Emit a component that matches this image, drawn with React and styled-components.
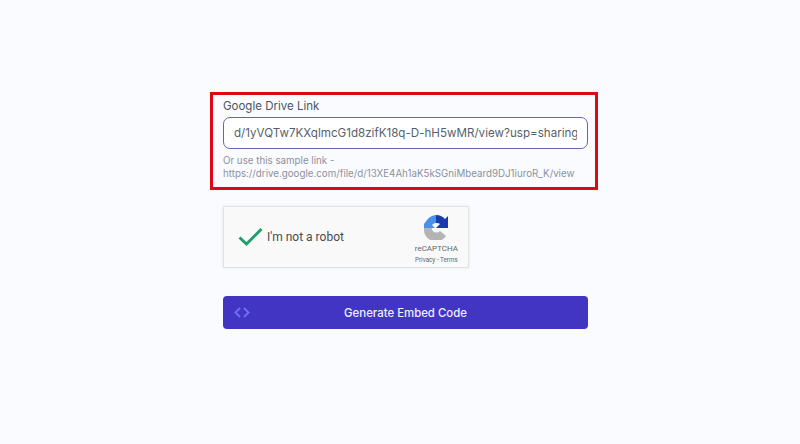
import React from 'react';
import styled, { createGlobalStyle } from 'styled-components';

const GlobalStyle = createGlobalStyle`
  html, body {
    margin: 0;
    padding: 0;
    background: #fafbfe;
  }
  * {
    box-sizing: border-box;
  }
`;

const Page = styled.div`
  width: 800px;
  height: 444px;
  overflow: hidden;
  padding: 92px 0 0 210px;
  background: #fafbfe;
  font-family: Inter, "Liberation Sans", sans-serif;
`;

const Form = styled.form`
  width: 388px;
  display: flex;
  flex-direction: column;
`;

const Highlight = styled.div`
  height: 98px;
  border: 3px solid #dc0812;
  padding: 3px 8px 0 10px;
`;

const Label = styled.label`
  display: block;
  font-size: 11.5px;
  line-height: 17px;
  color: #4b5563;
  font-weight: 400;
`;

const LinkInput = styled.input`
  display: block;
  width: 365px;
  height: 32px;
  margin-top: 2px;
  padding: 0 10px;
  border: 1.5px solid #6366b8;
  border-radius: 7px;
  background: #fff;
  font-family: inherit;
  font-size: 11.6px;
  color: #565f6d;
  outline: none;
`;

const Hint = styled.p`
  margin: 5px 0 0;
  font-size: 9.75px;
  line-height: 13px;
  color: #8a919c;
`;

const Captcha = styled.div`
  width: 246px;
  height: 62px;
  margin: 16px 0 0 13px;
  padding: 0 10px 0 14px;
  display: flex;
  align-items: center;
  background: #f9f9f9;
  border: 1px solid #e2e2e2;
  box-shadow: 0 0 3px rgba(0, 0, 0, 0.08);
`;

const CheckMark = styled.svg`
  width: 25px;
  height: 20px;
  flex: none;
`;

const CaptchaText = styled.span`
  margin-left: 4px;
  flex: 1;
  font-family: Roboto, "Liberation Sans", sans-serif;
  font-size: 12px;
  color: #4a4a4a;
`;

const Badge = styled.div`
  display: flex;
  flex-direction: column;
  align-items: center;
  padding-top: 4px;
`;

const BadgeLogo = styled.svg`
  width: 26px;
  height: 26px;
`;

const BadgeName = styled.span`
  margin-top: 3px;
  font-family: Roboto, "Liberation Sans", sans-serif;
  font-size: 8px;
  line-height: 11px;
  color: #666;
`;

const BadgeLinks = styled.span`
  margin-top: 2px;
  font-family: Roboto, "Liberation Sans", sans-serif;
  font-size: 6.3px;
  line-height: 9px;
  color: #666;
`;

const Submit = styled.button`
  position: relative;
  width: 365px;
  height: 33px;
  margin: 28px 0 0 13px;
  border: none;
  border-radius: 4px;
  background: #4235c4;
  color: #eef0fb;
  font-family: inherit;
  font-size: 11.4px;
  font-weight: 500;
  text-align: center;
`;

const CodeIcon = styled.svg`
  position: absolute;
  left: 11px;
  top: 10px;
  width: 16px;
  height: 13px;
`;

const App = () => (
  <Page>
    <GlobalStyle />
    <Form>
      <Highlight>
        <Label>Google Drive Link</Label>
        <LinkInput readOnly value="d/1yVQTw7KXqlmcG1d8zifK18q-D-hH5wMR/view?usp=sharing" />
        <Hint>
          Or use this sample link -<br />
          https://drive.google.com/file/d/13XE4Ah1aK5kSGniMbeard9DJ1iuroR_K/view
        </Hint>
      </Highlight>

      <Captcha>
        <CheckMark viewBox="0 0 25 20">
          <path d="M1.5 10.5 L8.5 17 L23.5 2" fill="none" stroke="#1f9e6e" strokeWidth="3" />
        </CheckMark>
        <CaptchaText>I'm not a robot</CaptchaText>
        <Badge>
          <BadgeLogo viewBox="0 0 26 26">
            <path d="M1 14 L1 10 L4 6 A12 12 0 0 1 13 1 L13 9 A5 5 0 0 0 9 11 L12 14 Z" fill="#4a8fe8" />
            <path d="M13 1 A12 12 0 0 1 22 5 L25 2 L25 14 L13 14 L17 10 A5 5 0 0 0 13 9 Z" fill="#1c3aa9" />
            <path d="M1 14 L8.5 14 A5 5 0 0 0 17 17 L23 22 A12 12 0 0 1 1 14 Z" fill="#b4b4b4" />
          </BadgeLogo>
          <BadgeName>reCAPTCHA</BadgeName>
          <BadgeLinks>Privacy - Terms</BadgeLinks>
        </Badge>
      </Captcha>

      <Submit type="button">
        <CodeIcon viewBox="0 0 16 13">
          <path d="M6 2 L1.5 6.5 L6 11 M10 2 L14.5 6.5 L10 11" fill="none" stroke="#6d6df0" strokeWidth="2" />
        </CodeIcon>
        Generate Embed Code
      </Submit>
    </Form>
  </Page>
);

export default App;
